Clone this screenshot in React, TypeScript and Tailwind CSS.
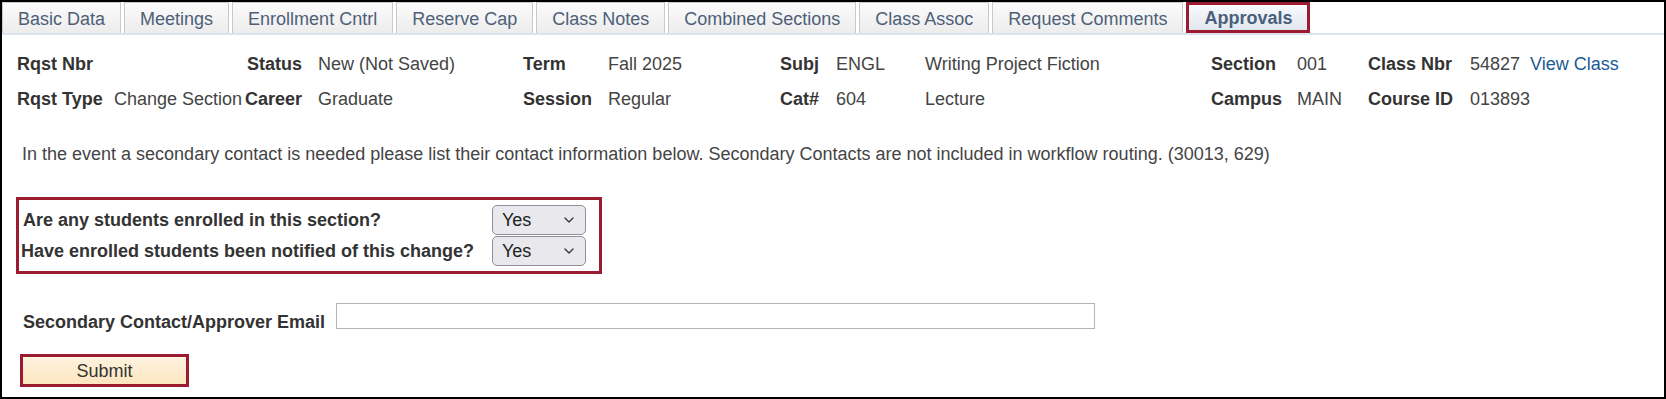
import React from 'react';

const tabs = [
    'Basic Data',
    'Meetings',
    'Enrollment Cntrl',
    'Reserve Cap',
    'Class Notes',
    'Combined Sections',
    'Class Assoc',
    'Request Comments',
    'Approvals',
];

const Label: React.FC<{ children?: React.ReactNode; right?: boolean }> = ({ children, right }) => (
    <div className={`font-bold text-[#333333] whitespace-nowrap ${right ? 'text-right' : ''}`}>{children}</div>
);

const Value: React.FC<{ children?: React.ReactNode; className?: string }> = ({ children, className }) => (
    <div className={`text-[#444444] whitespace-nowrap ${className ?? ''}`}>{children}</div>
);

const YesSelect: React.FC = () => (
    <div className="flex items-center justify-between w-[94px] h-[30px] rounded-[5px] border border-[#8f8f9d] bg-[#e9e9ed] pl-[9px] pr-[11px] text-[#222222]">
        <span>Yes</span>
        <svg width="10" height="6" viewBox="0 0 10 6" fill="none">
            <path d="M1 1l4 4 4-4" stroke="#333" strokeWidth="1.3" strokeLinecap="round" strokeLinejoin="round" />
        </svg>
    </div>
);

const App: React.FC = () => {
    return (
        <div
            className="w-[1666px] h-[399px] border-2 border-black bg-white text-[18px] leading-[22px] overflow-hidden"
            style={{ fontFamily: '"Liberation Sans", Arial, sans-serif' }}
        >
            {/* tab strip */}
            <div className="flex gap-[3px] h-[31px]">
                {tabs.map(t => {
                    const active = t === 'Approvals';
                    return (
                        <div
                            key={t}
                            className={
                                active
                                    ? 'flex items-center px-[15px] pt-[1px] border-[3px] border-[#9b1c31] bg-gradient-to-b from-[#f7f9fc] to-[#e2e8f0] font-bold text-[#4a5f7d]'
                                    : 'flex items-center px-[15px] pt-[1px] border border-b-0 border-[#c9c9c9] bg-gradient-to-b from-[#fbfbfb] to-[#ececec] text-[#4d6078]'
                            }
                        >
                            {t}
                        </div>
                    );
                })}
            </div>
            <div className="h-[2px] bg-[#dde4ee]" />

            {/* header fields */}
            <div className="ml-[15px] mt-[11px] grid grid-cols-[97px_128px_60px_221px_85px_172px_56px_89px_286px_86px_71px_102px_60px_auto] auto-rows-[35px] items-center">
                <Label>Rqst Nbr</Label>
                <Value />
                <Label right>Status</Label>
                <Value className="pl-[16px]">New (Not Saved)</Value>
                <Label>Term</Label>
                <Value>Fall 2025</Value>
                <Label>Subj</Label>
                <Value>ENGL</Value>
                <Value>Writing Project Fiction</Value>
                <Label>Section</Label>
                <Value>001</Value>
                <Label>Class Nbr</Label>
                <Value>54827</Value>
                <div className="text-[#1b5a94] whitespace-nowrap">View Class</div>

                <Label>Rqst Type</Label>
                <Value>Change Section</Value>
                <Label right>Career</Label>
                <Value className="pl-[16px]">Graduate</Value>
                <Label>Session</Label>
                <Value>Regular</Value>
                <Label>Cat#</Label>
                <Value>604</Value>
                <Value>Lecture</Value>
                <Label>Campus</Label>
                <Value>MAIN</Value>
                <Label>Course ID</Label>
                <Value>013893</Value>
                <div />
            </div>

            <p className="ml-[20px] mt-[27px] text-[#444444] whitespace-nowrap">
                In the event a secondary contact is needed please list their contact information below. Secondary Contacts are not included in workflow routing. (30013, 629)
            </p>

            {/* enrolment questions */}
            <div className="ml-[14px] mt-[32px] w-[586px] h-[77px] border-[3px] border-[#9b1c31] pt-[5px] pr-[13px] flex flex-col gap-[1px]">
                <div className="flex items-center justify-between">
                    <span className="pl-[4px] font-bold text-[#333333]">Are any students enrolled in this section?</span>
                    <YesSelect />
                </div>
                <div className="flex items-center justify-between">
                    <span className="pl-[2px] font-bold text-[#333333]">Have enrolled students been notified of this change?</span>
                    <YesSelect />
                </div>
            </div>

            {/* secondary contact */}
            <div className="ml-[21px] mt-[29px] flex items-start gap-[11px]">
                <span className="pt-[8px] font-bold text-[#333333] whitespace-nowrap">Secondary Contact/Approver Email</span>
                <div className="w-[759px] h-[26px] border border-[#b5b5b5] bg-white" />
            </div>

            <div className="ml-[18px] mt-[21px]">
                <button className="w-[169px] h-[33px] border-[3px] border-[#9b1c31] bg-gradient-to-b from-[#fef3df] to-[#fde6bf] text-[#333333] text-[18px] leading-[22px]">
                    Submit
                </button>
            </div>
        </div>
    );
};

export default App;
